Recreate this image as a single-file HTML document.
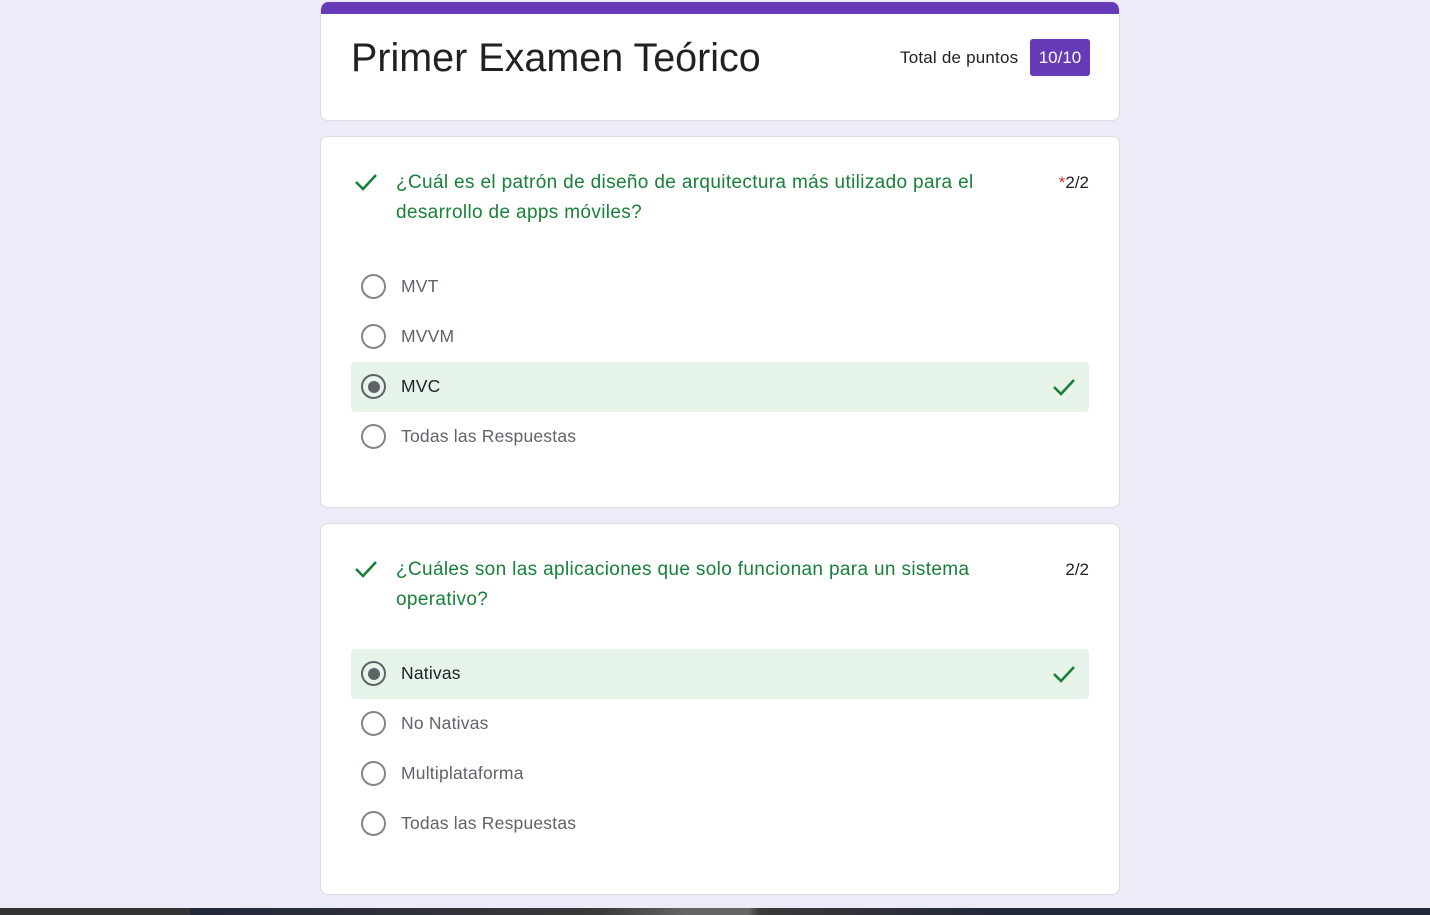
<!DOCTYPE html>
<html><head><meta charset="utf-8"><style>
*{box-sizing:border-box;margin:0;padding:0}
body{width:1430px;height:915px;background:#eeebf8;font-family:"Liberation Sans",Roboto,sans-serif;position:relative;overflow:hidden}
.card{position:absolute;left:320px;width:800px;background:#fff;border:1px solid #dadce0;border-radius:8px}
.abs{position:absolute}
.q{position:absolute;left:75px;top:31px;width:620px;color:#188038;font-size:19px;letter-spacing:0.35px;line-height:30px}
.pts{position:absolute;right:30px;top:31px;font-size:17px;line-height:30px;color:#202124}
.chk{position:absolute}
.opt{position:absolute;left:30px;width:738px;height:50px;border-radius:4px}
.opt.ok{background:#e6f4ea}
.radio{position:absolute;left:10px;top:12px;width:25px;height:25px;border:2px solid #80868b;border-radius:50%}
.radio.on{border-color:#5f6368}
.radio.on::after{content:"";position:absolute;left:4.5px;top:4.5px;width:12px;height:12px;border-radius:50%;background:#5f6368}
.lbl{position:absolute;left:50px;top:14px;font-size:17.5px;letter-spacing:0.2px;color:#5f6368}
.ok .lbl{color:#202124}
.ok svg{position:absolute;right:12px;top:13px}
</style></head><body>
<div class="card" style="top:2px;height:119px;border-top:none;overflow:hidden">
 <div class="abs" style="left:0;top:0;width:800px;height:12px;background:#673ab7"></div>
 <div class="abs" style="left:30px;top:34px;font-size:39.5px;color:#202124">Primer Examen Teórico</div>
 <div class="abs" style="left:579px;top:46px;font-size:17px;letter-spacing:0.2px;color:#202124">Total de puntos</div>
 <div class="abs" style="left:709px;top:37px;width:60px;height:37px;background:#673ab7;border-radius:3px;color:#fff;font-size:17px;line-height:37px;text-align:center">10/10</div>
</div>

<div class="card" style="top:136px;height:372px">
 <svg class="chk" style="left:32px;top:33px" width="26" height="24" viewBox="0 0 26 24"><path d="M3 12 L10 19 L23 5" fill="none" stroke="#188038" stroke-width="2.6"/></svg>
 <div class="q">¿Cuál es el patrón de diseño de arquitectura más utilizado para el desarrollo de apps móviles?</div>
 <div class="pts"><span style="color:#d93025">*</span>2/2</div>
 <div class="opt" style="top:125px"><div class="radio"></div><div class="lbl">MVT</div></div>
 <div class="opt" style="top:175px"><div class="radio"></div><div class="lbl">MVVM</div></div>
 <div class="opt ok" style="top:225px"><div class="radio on"></div><div class="lbl">MVC</div><svg width="26" height="24" viewBox="0 0 26 24"><path d="M3 12 L10 19 L23 5" fill="none" stroke="#188038" stroke-width="2.6"/></svg></div>
 <div class="opt" style="top:275px"><div class="radio"></div><div class="lbl">Todas las Respuestas</div></div>
</div>

<div class="card" style="top:523px;height:372px">
 <svg class="chk" style="left:32px;top:33px" width="26" height="24" viewBox="0 0 26 24"><path d="M3 12 L10 19 L23 5" fill="none" stroke="#188038" stroke-width="2.6"/></svg>
 <div class="q">¿Cuáles son las aplicaciones que solo funcionan para un sistema operativo?</div>
 <div class="pts">2/2</div>
 <div class="opt ok" style="top:125px"><div class="radio on"></div><div class="lbl">Nativas</div><svg width="26" height="24" viewBox="0 0 26 24"><path d="M3 12 L10 19 L23 5" fill="none" stroke="#188038" stroke-width="2.6"/></svg></div>
 <div class="opt" style="top:175px"><div class="radio"></div><div class="lbl">No Nativas</div></div>
 <div class="opt" style="top:225px"><div class="radio"></div><div class="lbl">Multiplataforma</div></div>
 <div class="opt" style="top:275px"><div class="radio"></div><div class="lbl">Todas las Respuestas</div></div>
</div>

<div class="abs" style="left:0;top:908px;width:1430px;height:7px;background:linear-gradient(90deg,#333 0,#333 190px,#23273a 190px,#3a3a3a 600px,#666 688px,#666 748px,#3a3a3a 760px,#23273a 1000px)"></div>
</body></html>
